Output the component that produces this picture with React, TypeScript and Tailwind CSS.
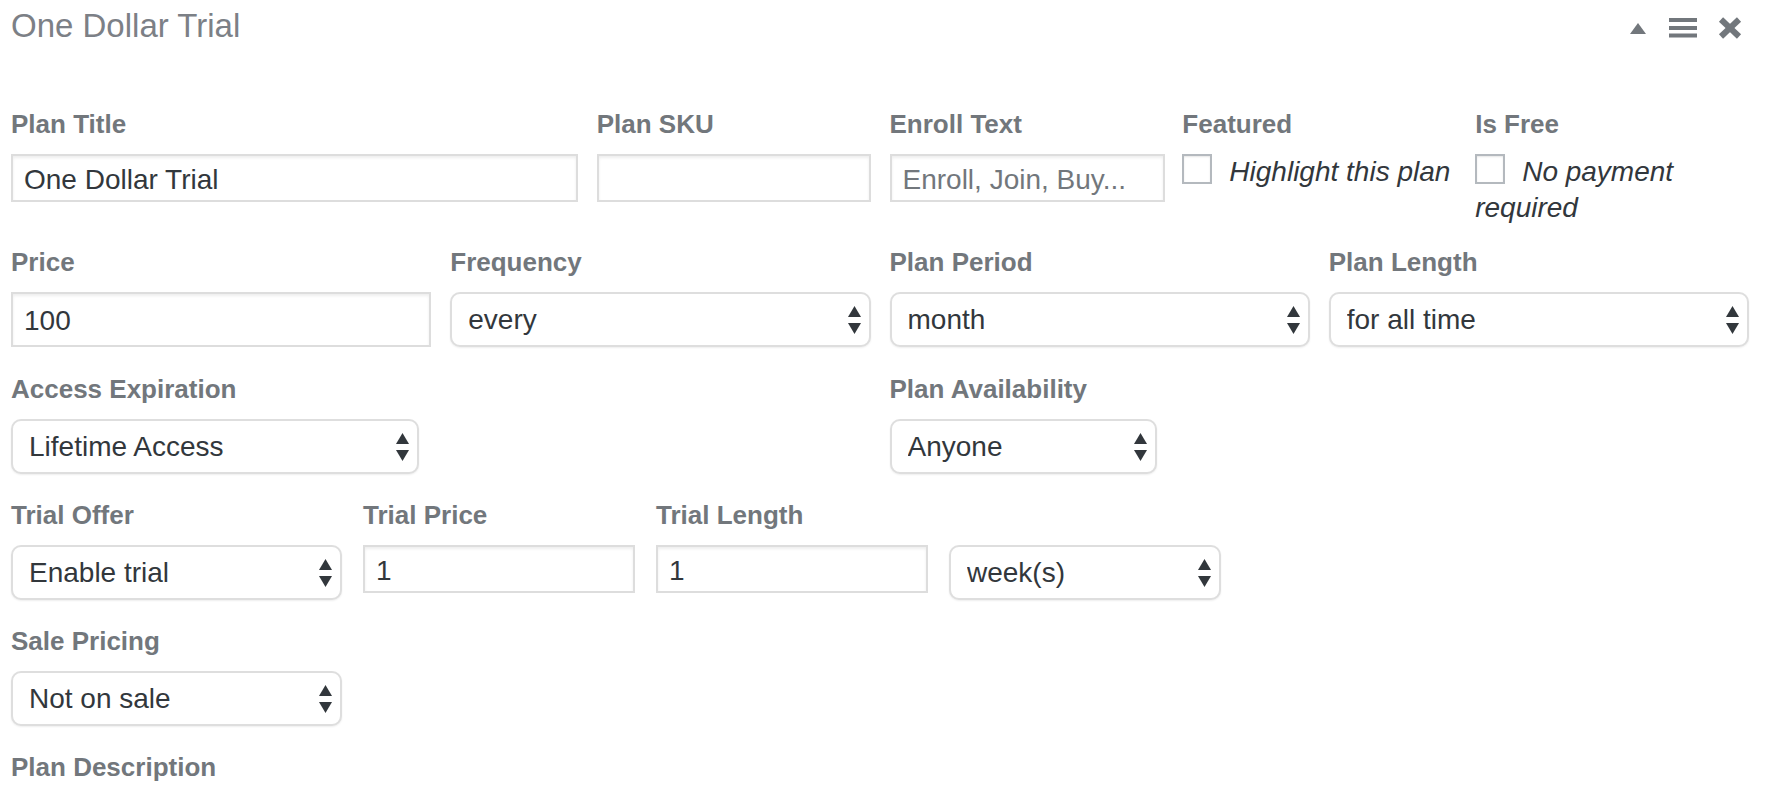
import React from "react";

// small up/down arrows drawn by the macOS select
function Arrows() {
    return (
        <svg
            className="pointer-events-none absolute right-[10px] top-1/2 -translate-y-1/2"
            width="13"
            height="28"
            viewBox="0 0 13 28"
        >
            <polygon points="0,11 6.5,0 13,11" fill="#32373c" />
            <polygon points="0,17 13,17 6.5,28" fill="#32373c" />
        </svg>
    );
}

function Select({ value, width }: { value: string; width: string }) {
    return (
        <div className={`relative ${width}`}>
            <select
                defaultValue={value}
                className="h-[55px] w-full appearance-none rounded-[10px] border-2 border-[#dedede] bg-white pl-[16px] pr-[40px] text-[28px] text-[#32373c] shadow-[0_1px_2px_rgba(0,0,0,0.07)] outline-none"
            >
                <option>{value}</option>
            </select>
            <Arrows />
        </div>
    );
}

function TextInput({
    value,
    placeholder,
    tall,
}: {
    value?: string;
    placeholder?: string;
    tall?: boolean;
}) {
    return (
        <input
            type="text"
            defaultValue={value}
            placeholder={placeholder}
            className={
                (tall ? "h-[55px] " : "h-[48px] ") +
                "w-full border-2 border-[#dddddd] bg-white px-[11px] pt-[3px] text-[28px] text-[#32373c] shadow-[inset_0_2px_3px_rgba(0,0,0,0.07)] outline-none placeholder:text-[#72777c]"
            }
        />
    );
}

function Label({ children }: { children: React.ReactNode }) {
    return (
        <div className="mb-[12px] h-[36px] whitespace-nowrap text-[26px] font-bold leading-[36px] text-[#72777c]">
            {children}
        </div>
    );
}

function Checkbox() {
    return (
        <input
            type="checkbox"
            className="mr-[17px] inline-block h-[30px] w-[30px] appearance-none border-2 border-[#b4b9be] bg-white align-[-3px] shadow-[inset_0_1px_2px_rgba(0,0,0,0.1)]"
        />
    );
}

export default function App() {
    return (
        <div className="min-h-screen bg-white pl-[11px] pr-[20px] font-['Liberation_Sans',Arial,sans-serif]">
            {/* header */}
            <div className="flex h-[106px] items-start justify-between pr-[26px]">
                <h2 className="mt-[6px] text-[33px] font-normal leading-[40px] text-[#7c8086]">
                    One Dollar Trial
                </h2>
                <div className="mt-[17px] flex items-start">
                    <svg className="mt-[6px]" width="16" height="11" viewBox="0 0 16 11">
                        <polygon points="0,11 8,0 16,11" fill="#72777c" />
                    </svg>
                    <svg className="ml-[23px] mt-[1px]" width="28" height="20" viewBox="0 0 28 20">
                        <rect x="0" y="0" width="28" height="4" fill="#72777c" />
                        <rect x="0" y="8" width="28" height="4" fill="#72777c" />
                        <rect x="0" y="15.5" width="28" height="4" fill="#72777c" />
                    </svg>
                    <svg className="ml-[21px]" width="24" height="22" viewBox="0 0 24 22">
                        <line x1="3" y1="2.5" x2="21" y2="19.5" stroke="#72777c" strokeWidth="6" />
                        <line x1="21" y1="2.5" x2="3" y2="19.5" stroke="#72777c" strokeWidth="6" />
                    </svg>
                </div>
            </div>

            {/* row 1 */}
            <div className="mb-[18px] grid grid-cols-12">
                <div className="col-span-4 pr-[19px]">
                    <Label>Plan Title</Label>
                    <TextInput value="One Dollar Trial" />
                </div>
                <div className="col-span-2 pr-[19px]">
                    <Label>Plan SKU</Label>
                    <TextInput />
                </div>
                <div className="col-span-2 pr-[17px]">
                    <Label>Enroll Text</Label>
                    <TextInput placeholder="Enroll, Join, Buy..." />
                </div>
                <div className="col-span-2 pr-[19px]">
                    <Label>Featured</Label>
                    <div className="text-[28px] italic leading-[36px] text-[#32373c]">
                        <Checkbox />
                        Highlight this plan
                    </div>
                </div>
                <div className="col-span-2 pr-[19px]">
                    <Label>Is Free</Label>
                    <div className="text-[28px] italic leading-[36px] text-[#32373c]">
                        <Checkbox />
                        No payment required
                    </div>
                </div>
            </div>

            {/* row 2 */}
            <div className="mb-[24px] grid grid-cols-12">
                <div className="col-span-3 pr-[19px]">
                    <Label>Price</Label>
                    <TextInput value="100" tall />
                </div>
                <div className="col-span-3 pr-[19px]">
                    <Label>Frequency</Label>
                    <Select value="every" width="w-full" />
                </div>
                <div className="col-span-3 pr-[19px]">
                    <Label>Plan Period</Label>
                    <Select value="month" width="w-full" />
                </div>
                <div className="col-span-3 pr-[19px]">
                    <Label>Plan Length</Label>
                    <Select value="for all time" width="w-full" />
                </div>
            </div>

            {/* row 3 */}
            <div className="mb-[23px] grid grid-cols-12">
                <div className="col-span-6">
                    <Label>Access Expiration</Label>
                    <Select value="Lifetime Access" width="w-[408px]" />
                </div>
                <div className="col-span-6">
                    <Label>Plan Availability</Label>
                    <Select value="Anyone" width="w-[267px]" />
                </div>
            </div>

            {/* row 4 */}
            <div className="mb-[23px] flex items-start gap-[21px]">
                <div>
                    <Label>Trial Offer</Label>
                    <Select value="Enable trial" width="w-[331px]" />
                </div>
                <div className="w-[272px]">
                    <Label>Trial Price</Label>
                    <TextInput value="1" />
                </div>
                <div className="w-[272px]">
                    <Label>Trial Length</Label>
                    <TextInput value="1" />
                </div>
                <div className="pt-[48px]">
                    <Select value="week(s)" width="w-[272px]" />
                </div>
            </div>

            {/* row 5 */}
            <div className="mb-[23px]">
                <Label>Sale Pricing</Label>
                <Select value="Not on sale" width="w-[331px]" />
            </div>

            {/* row 6 */}
            <div>
                <Label>Plan Description</Label>
            </div>
        </div>
    );
}
